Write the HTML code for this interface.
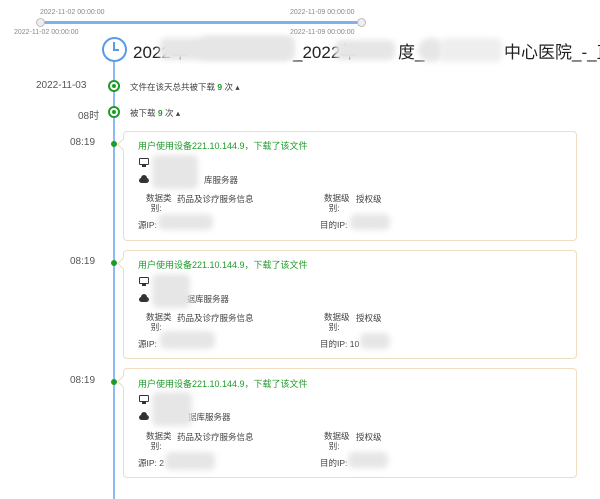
<!DOCTYPE html>
<html><head><meta charset="utf-8"><style>
body{margin:0;width:600px;height:499px;background:#fff;position:relative;overflow:hidden;font-family:"Liberation Sans","Noto Sans CJK SC",sans-serif;color:#333}
.a{position:absolute;white-space:nowrap}
.s{font-size:7px;color:#888}
.blur{position:absolute;background:#e6e6e6;filter:blur(3px);border-radius:6px}
.card{position:absolute;left:123px;width:452px;border:1px solid #f0dcc0;border-radius:4px;background:#fff}
.card:before{content:"";position:absolute;left:-5px;top:8px;width:8px;height:8px;background:#fff;border-left:1px solid #f0dcc0;border-bottom:1px solid #f0dcc0;transform:rotate(45deg)}
.t{font-size:9px;color:#1f9b2a}
.f{font-size:8.5px;color:#444}
.time{font-size:10px;color:#555}
.dot{position:absolute;left:111px;width:6px;height:6px;border-radius:50%;background:#1f9b2a}
.ring{position:absolute;left:108px;width:8px;height:8px;border:2px solid #1f9b2a;border-radius:50%;background:#fff}
.ring:after{content:"";position:absolute;left:2px;top:2px;width:4px;height:4px;border-radius:50%;background:#1f9b2a}
.tt{font-size:17px;color:#222;top:38px}
.mon{position:absolute;left:139px;width:8px;height:5px;border:1.5px solid #333;border-radius:1px}
.mon:after{content:"";position:absolute;left:2px;top:6px;width:4px;height:1.5px;background:#333}
.cl{position:absolute;left:139px;width:10px;height:5px;background:#333;border-radius:3px}
.cl:before{content:"";position:absolute;left:2px;top:-3px;width:6px;height:6px;background:#333;border-radius:50%}
</style></head><body>
<div class="a s" style="left:40px;top:9px">2022-11-02 00:00:00</div>
<div class="a s" style="left:290px;top:9px">2022-11-09 00:00:00</div>
<div class="a" style="left:40px;top:21px;width:322px;height:3px;background:#7fb0f0"></div>
<div class="a" style="left:36px;top:18px;width:7px;height:7px;border:1px solid #bbb;border-radius:50%;background:#eee"></div>
<div class="a" style="left:357px;top:18px;width:7px;height:7px;border:1px solid #bbb;border-radius:50%;background:#eee"></div>
<div class="a s" style="left:14px;top:29px">2022-11-02 00:00:00</div>
<div class="a s" style="left:290px;top:29px">2022-11-09 00:00:00</div>
<div class="a" style="left:113px;top:58px;width:2px;height:441px;background:#8dbaf0"></div>
<div class="a" style="left:102px;top:37px;width:21px;height:21px;border:2px solid #5a9ae8;border-radius:50%;background:#fff"></div>
<div class="a" style="left:113px;top:42px;width:2px;height:8px;background:#5a9ae8"></div>
<div class="a" style="left:113px;top:49px;width:6px;height:2px;background:#5a9ae8"></div>
<div class="a tt" style="left:133px">2022年</div>
<div class="a tt" style="left:293px">_2022年</div>
<div class="a tt" style="left:398px">度_</div>
<div class="a tt" style="left:504px">中心医院_-_直</div>
<div class="blur" style="left:160px;top:38px;width:130px;height:22px"></div>
<div class="blur" style="left:200px;top:36px;width:95px;height:24px"></div>
<div class="blur" style="left:335px;top:40px;width:60px;height:20px"></div>
<div class="blur" style="left:418px;top:38px;width:26px;height:24px;border-radius:50%"></div>
<div class="blur" style="left:440px;top:38px;width:62px;height:24px;background:#eee"></div>
<div class="a time" style="left:36px;top:80px">2022-11-03</div>
<div class="ring" style="top:80px"></div>
<div class="a f" style="left:130px;top:81px">文件在该天总共被下载 <b style="color:#1f9b2a">9</b> 次 ▴</div>
<div class="a time" style="left:78px;top:107px">08时</div>
<div class="ring" style="top:106px"></div>
<div class="a f" style="left:130px;top:107px">被下载 <b style="color:#1f9b2a">9</b> 次 ▴</div>

<div class="time a" style="left:70px;top:137px">08:19</div><div class="dot" style="top:141px"></div>
<div class="card" style="top:131px;height:108px"></div>
<div class="time a" style="left:70px;top:256px">08:19</div><div class="dot" style="top:260px"></div>
<div class="card" style="top:250px;height:107px"></div>
<div class="time a" style="left:70px;top:375px">08:19</div><div class="dot" style="top:379px"></div>
<div class="card" style="top:368px;height:108px"></div>

<div class="a t" style="left:138px;top:139px">用户使用设备221.10.144.9，下载了该文件</div>
<div class="mon" style="top:158px"></div>
<div class="cl" style="top:178px"></div>
<div class="a f" style="left:204px;top:174px">库服务器</div>
<div class="blur" style="left:152px;top:155px;width:46px;height:34px"></div>
<div class="a f" style="left:146px;top:193px;line-height:10px">数据类<br>&nbsp;&nbsp;别:</div>
<div class="a f" style="left:177px;top:193px">药品及诊疗服务信息</div>
<div class="a f" style="left:324px;top:193px;line-height:10px">数据级<br>&nbsp;&nbsp;别:</div>
<div class="a f" style="left:356px;top:193px">授权级</div>
<div class="a f" style="left:138px;top:219px">源IP:</div><div class="blur" style="left:158px;top:214px;width:55px;height:16px"></div>
<div class="a f" style="left:320px;top:219px">目的IP:</div><div class="blur" style="left:350px;top:214px;width:40px;height:16px"></div>

<div class="a t" style="left:138px;top:258px">用户使用设备221.10.144.9，下载了该文件</div>
<div class="mon" style="top:277px"></div>
<div class="cl" style="top:297px"></div>
<div class="a f" style="left:178px;top:293px">数据库服务器</div>
<div class="blur" style="left:152px;top:274px;width:38px;height:34px"></div>
<div class="a f" style="left:146px;top:312px;line-height:10px">数据类<br>&nbsp;&nbsp;别:</div>
<div class="a f" style="left:177px;top:312px">药品及诊疗服务信息</div>
<div class="a f" style="left:324px;top:312px;line-height:10px">数据级<br>&nbsp;&nbsp;别:</div>
<div class="a f" style="left:356px;top:312px">授权级</div>
<div class="a f" style="left:138px;top:338px">源IP:</div><div class="blur" style="left:160px;top:331px;width:55px;height:18px"></div>
<div class="a f" style="left:320px;top:338px">目的IP: 10</div><div class="blur" style="left:360px;top:333px;width:30px;height:16px"></div>

<div class="a t" style="left:138px;top:377px">用户使用设备221.10.144.9，下载了该文件</div>
<div class="mon" style="top:395px"></div>
<div class="cl" style="top:415px"></div>
<div class="a f" style="left:188px;top:411px">据库服务器</div>
<div class="blur" style="left:152px;top:392px;width:40px;height:34px"></div>
<div class="a f" style="left:146px;top:431px;line-height:10px">数据类<br>&nbsp;&nbsp;别:</div>
<div class="a f" style="left:177px;top:431px">药品及诊疗服务信息</div>
<div class="a f" style="left:324px;top:431px;line-height:10px">数据级<br>&nbsp;&nbsp;别:</div>
<div class="a f" style="left:356px;top:431px">授权级</div>
<div class="a f" style="left:138px;top:457px">源IP: 2</div><div class="blur" style="left:165px;top:452px;width:50px;height:18px"></div>
<div class="a f" style="left:320px;top:457px">目的IP:</div><div class="blur" style="left:348px;top:452px;width:40px;height:16px"></div>
</body></html>
